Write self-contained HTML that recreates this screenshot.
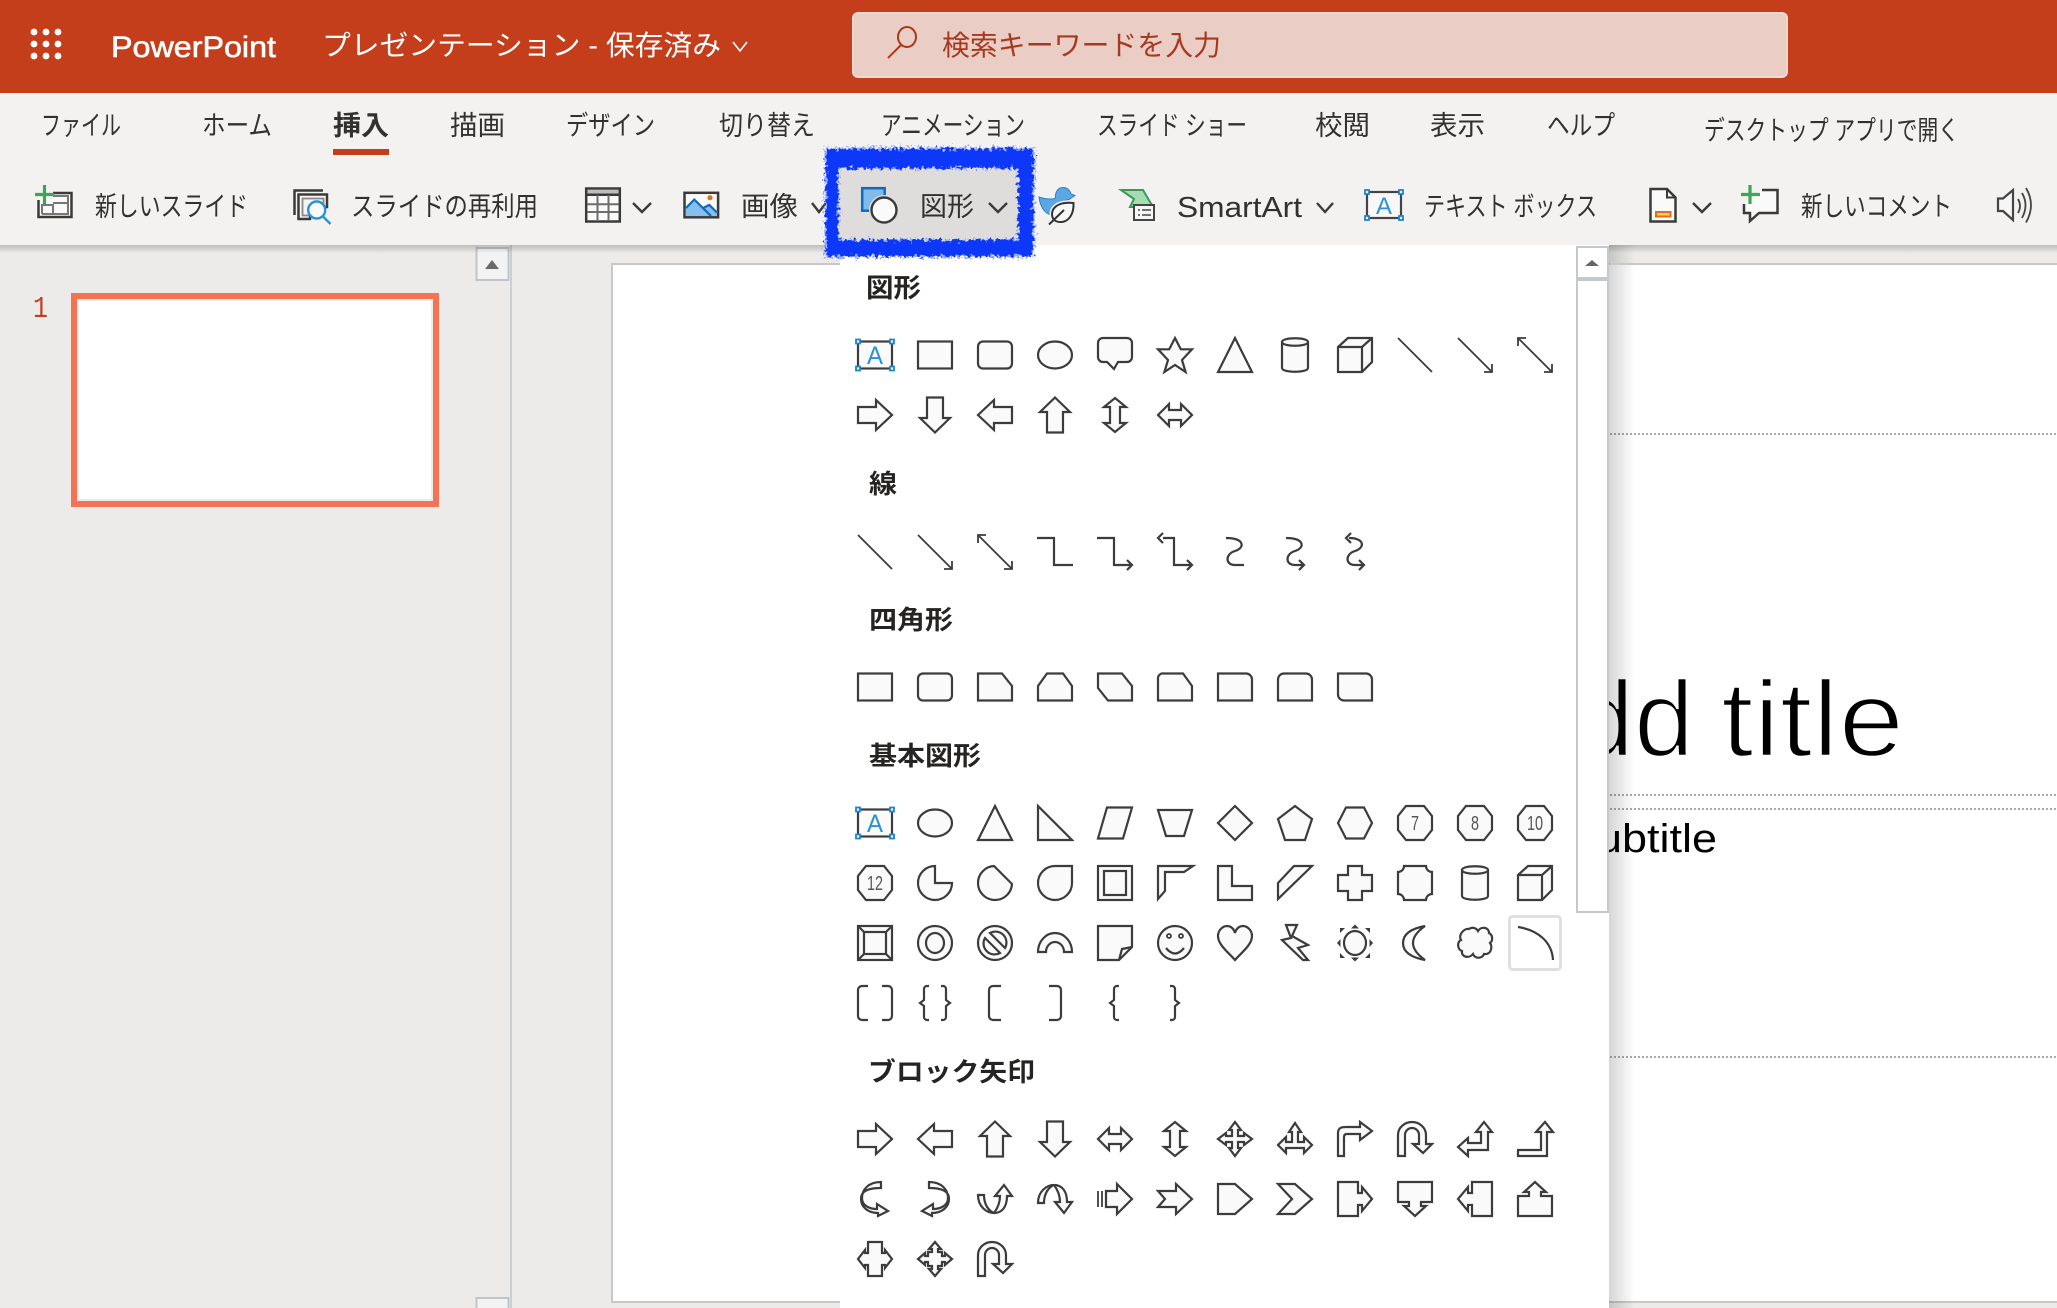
<!DOCTYPE html>
<html lang="ja"><head><meta charset="utf-8"><title>PowerPoint</title>
<style>
html,body{margin:0;padding:0;width:2057px;height:1308px;overflow:hidden;background:#ecebe9}
svg{display:block}
text{font-family:"Liberation Sans","Noto Sans CJK JP",sans-serif}
.t{font-size:27px;fill:#323130}
.h{font-size:26px;font-weight:700;fill:#252423}
.s{fill:#fafafa;stroke:#3c3c3c;stroke-width:2.2}
.n{fill:none;stroke:#3c3c3c;stroke-width:2.2}
.l{fill:none;stroke:#3c3c3c;stroke-width:1.8}
.num{font-size:20px;fill:#555;stroke:none}
.chev{fill:none;stroke:#3a3a3a;stroke-width:2.4}
.dk{stroke:#3b3a39;stroke-width:2.5}
.dot{stroke:#aaa;stroke-width:2;stroke-dasharray:2 2;fill:none}
</style></head><body>
<svg xmlns="http://www.w3.org/2000/svg" width="2057" height="1308" viewBox="0 0 2057 1308">
<defs>
<linearGradient id="sh" x1="0" x2="1" y1="0" y2="0"><stop offset="0" stop-color="#000" stop-opacity=".16"/><stop offset="1" stop-color="#000" stop-opacity="0"/></linearGradient>
<linearGradient id="shd" x1="0" x2="0" y1="0" y2="1"><stop offset="0" stop-color="#000" stop-opacity=".2"/><stop offset="1" stop-color="#000" stop-opacity="0"/></linearGradient>
<filter id="rough" x="-10%" y="-20%" width="120%" height="140%"><feTurbulence type="fractalNoise" baseFrequency="0.28" numOctaves="3" seed="7"/><feDisplacementMap in="SourceGraphic" scale="11" xChannelSelector="R" yChannelSelector="G"/></filter>
<filter id="rough2" x="-10%" y="-20%" width="120%" height="140%"><feTurbulence type="fractalNoise" baseFrequency="0.4" numOctaves="2" seed="12"/><feDisplacementMap in="SourceGraphic" scale="14" xChannelSelector="G" yChannelSelector="R"/></filter>
<g id="tb"><rect class="s" x="-17" y="-13.5" width="34" height="27"/><g fill="#fff" stroke="#1a86d0" stroke-width="1.8"><rect x="-19" y="-15.5" width="4" height="4"/><rect x="15" y="-15.5" width="4" height="4"/><rect x="-19" y="11.5" width="4" height="4"/><rect x="15" y="11.5" width="4" height="4"/></g><text x="-8" y="9" font-size="25" fill="#2a93d5" textLength="16" lengthAdjust="spacingAndGlyphs">A</text></g>
<rect id="rc" class="s" x="-17" y="-13.5" width="34" height="27"/>
<rect id="rr" class="s" x="-17" y="-13.5" width="34" height="27" rx="5"/>
<ellipse id="el" class="s" cx="0" cy="0" rx="17" ry="13.5"/>
<path id="tri" class="s" d="M0,-17L17,17H-17Z"/>
<g id="cyl"><path class="s" d="M-13,-13C-13,-18 13,-18 13,-13V13C13,18 -13,18 -13,13Z"/><path class="n" d="M-13,-13C-13,-8 13,-8 13,-13"/></g>
<g id="cube"><path class="s" d="M-17,-8L-7,-17H17V7L7,17H-17Z"/><path class="n" d="M-17,-8H7V17M7,-8L17,-17"/></g>
<path id="ln" class="l" d="M-17,-17L17,17"/>
<path id="la" class="l" d="M-17,-17L17,17M17,9V17H9"/>
<path id="ld" class="l" d="M-17,-17L17,17M17,9V17H9M-17,-9V-17H-9"/>
<path id="ar" class="s" d="M-17,-8H1V-15L17,0L1,15V8H-17Z"/>
<path id="al" class="s" d="M17,-8H-1V-15L-17,0L-1,15V8H17Z"/>
<path id="au" class="s" d="M-8,17.5V-3H-15L0,-17.5L15,-3H8V17.5Z"/>
<path id="ad" class="s" d="M-8,-17.5V3H-15L0,17.5L15,3H8V-17.5Z"/>
<path id="aud" class="s" d="M0,-17L11,-8H5V8H11L0,17L-11,8H-5V-8H-11Z"/>
<path id="alr" class="s" d="M-17,0L-6,-11V-5H6V-11L17,0L6,11V5H-6V11Z"/>
<path id="oct" class="s" d="M-9,-17H9L17,-7V7L9,17H-9L-17,7V-7Z"/>
<g id="uturn"><path class="s" d="M-17,17V-4A14,13 0 0 1 11,-4V5H17L8,14L-2,5H4V-4A7,7 0 0 0 -10,-4V17Z"/></g>
<path id="curv" class="s" d="M6,-17C-7,-17 -13,-9 -13,-1C-13,7 -5,10 2,10V5L13,12L3,17V14C-7,14 -14,8 -14,0C-14,-8 -7,-11 6,-11Z"/>
<g id="cup"><path class="s" d="M-17,-4C-17,8 -8,14 -1,14C7,14 12,8 12,-3H17L9,-14L0,-3H5C5,4 2,10 -1,14C-6,12 -11,6 -11,-4Z"/></g>
</defs>

<rect width="2057" height="1308" fill="#ecebe9"/>
<rect x="612" y="264" width="1460" height="1038" fill="#fff" stroke="#c8c8c8" stroke-width="2"/>
<path class="dot" d="M1610,434H2057M1610,795H2057M1610,809H2057M1610,1057H2057"/>
<text x="1574" y="756" font-size="108" fill="#000" stroke="#fff" stroke-width="2.5" textLength="120" lengthAdjust="spacingAndGlyphs">dd</text>
<text x="1721" y="756" font-size="108" fill="#000" stroke="#fff" stroke-width="2.5" textLength="183" lengthAdjust="spacingAndGlyphs">title</text>
<text x="1597" y="852" font-size="40" fill="#000" textLength="120" lengthAdjust="spacingAndGlyphs">ubtitle</text>

<rect x="510" y="245" width="2" height="1063" fill="#ccd0d3"/>
<rect x="476.500" y="248" width="32" height="32" fill="#f3f3f3" stroke="#c0c4c8" stroke-width="2"/>
<path d="M485,269L492,260L499,269Z" fill="#6a6a6a"/>
<rect x="476.500" y="1298" width="32" height="20" fill="#f3f3f3" stroke="#c0c4c8" stroke-width="2"/>
<text x="33" y="317" font-size="31" fill="#c43e1c" textLength="15" lengthAdjust="spacingAndGlyphs" style="font-family:'Liberation Mono',monospace">1</text>
<rect x="74" y="296" width="362" height="208" fill="#fff" stroke="#f37352" stroke-width="6"/>
<rect x="78" y="300" width="354" height="200" fill="none" stroke="#eaeaea" stroke-width="2"/>

<rect x="1609" y="245" width="26" height="1063" fill="url(#sh)"/>
<rect x="840" y="245" width="769" height="1063" fill="#fff"/>
<rect x="1577" y="247" width="31" height="31" fill="#fff" stroke="#c4c8cc" stroke-width="2"/>
<path d="M1585,266L1592,260L1599,266Z" fill="#666"/>
<rect x="1577" y="280" width="31" height="632" fill="#fff" stroke="#c4c8cc" stroke-width="2"/>

<rect width="2057" height="93" fill="#c43e1c"/>
<g fill="#fff"><circle cx="34" cy="32" r="3.400"/><circle cx="46" cy="32" r="3.400"/><circle cx="58" cy="32" r="3.400"/><circle cx="34" cy="44" r="3.400"/><circle cx="46" cy="44" r="3.400"/><circle cx="58" cy="44" r="3.400"/><circle cx="34" cy="56" r="3.400"/><circle cx="46" cy="56" r="3.400"/><circle cx="58" cy="56" r="3.400"/></g>
<text x="111" y="57" font-size="30" fill="#fff" stroke="#fff" stroke-width=".6" textLength="165" lengthAdjust="spacingAndGlyphs">PowerPoint</text>
<text x="322" y="55" font-size="28" fill="#fff" textLength="399" lengthAdjust="spacingAndGlyphs">プレゼンテーション - 保存済み</text>
<path d="M733,42L740,51L747,42" fill="none" stroke="#fff" stroke-width="1.600"/>
<rect x="853" y="13" width="934" height="64" rx="5" fill="#eacdc5" stroke="#efd9d3" stroke-width="2"/>
<ellipse cx="907" cy="37" rx="9" ry="10" fill="none" stroke="#a8391a" stroke-width="2"/><path d="M901,45L888,58" stroke="#a8391a" stroke-width="2"/>
<text x="942" y="55" font-size="28" fill="#a63a1e" textLength="279" lengthAdjust="spacingAndGlyphs">検索キーワードを入力</text>

<rect y="93" width="2057" height="152" fill="#f3f2f1"/>
<rect y="245" width="840" height="8" fill="url(#shd)"/><rect x="1609" y="245" width="448" height="8" fill="url(#shd)"/>
<rect x="1610" y="263" width="447" height="2" fill="#c8c8c8"/>
<text class="t" x="41" y="135" textLength="80" lengthAdjust="spacingAndGlyphs">ファイル</text>
<text class="t" x="202" y="135" textLength="70" lengthAdjust="spacingAndGlyphs">ホーム</text>
<text class="t" x="333" y="135" textLength="56" lengthAdjust="spacingAndGlyphs" font-weight="700">挿入</text>
<rect x="333" y="149" width="56" height="6" fill="#c43e1c"/>
<text class="t" x="450" y="135" textLength="55" lengthAdjust="spacingAndGlyphs">描画</text>
<text class="t" x="566" y="135" textLength="89" lengthAdjust="spacingAndGlyphs">デザイン</text>
<text class="t" x="719" y="135" textLength="96" lengthAdjust="spacingAndGlyphs">切り替え</text>
<text class="t" x="881" y="135" textLength="144" lengthAdjust="spacingAndGlyphs">アニメーション</text>
<text class="t" x="1097" y="135" textLength="150" lengthAdjust="spacingAndGlyphs">スライド ショー</text>
<text class="t" x="1315" y="135" textLength="55" lengthAdjust="spacingAndGlyphs">校閲</text>
<text class="t" x="1430" y="135" textLength="55" lengthAdjust="spacingAndGlyphs">表示</text>
<text class="t" x="1547" y="135" textLength="68" lengthAdjust="spacingAndGlyphs">ヘルプ</text>
<text class="t" x="1704" y="140" textLength="255" lengthAdjust="spacingAndGlyphs">デスクトップ アプリで開く</text>

<!-- new slide -->
<path d="M38.500,200V217H71.500V193H53" fill="#f9f9f9" class="dk"/>
<path d="M42,214V205H53V214M53,203H68M53,196H68V214H42" fill="none" stroke="#777" stroke-width="2"/>
<path d="M44.500,185V204M35,194.500H54" stroke="#3aa757" stroke-width="3.200"/>
<text class="t" x="95" y="216" textLength="153" lengthAdjust="spacingAndGlyphs">新しいスライド</text>

<!-- reuse -->
<path d="M294.500,215V190.500H323" fill="none" class="dk"/>
<path d="M298.500,219V194.500H327V207H310V219Z" fill="#f9f9f9" class="dk"/>
<rect x="302.500" y="198.500" width="21" height="17" fill="#f5f5f5" stroke="#888" stroke-width="1.800"/>
<circle cx="316.700" cy="210" r="8.500" fill="#fafafa" stroke="#2a93d5" stroke-width="2.400"/><path d="M322.500,216L330.500,224" stroke="#2a93d5" stroke-width="2.400"/>
<text class="t" x="351" y="216" textLength="187" lengthAdjust="spacingAndGlyphs">スライドの再利用</text>

<!-- table -->
<rect x="586.200" y="188.500" width="33.600" height="33" fill="#fafafa" class="dk"/>
<rect x="587.500" y="190" width="31" height="4" fill="#bdbdbc"/><path d="M586,194.800H620" class="dk"/>
<path d="M597.500,195V221M608.500,195V221M587,204.300H619M587,212H619" stroke="#6d6d6d" stroke-width="2"/>
<path class="chev" d="M633,203L642,212L651,203"/>

<!-- picture -->
<rect x="684.500" y="192.800" width="33.600" height="24.500" fill="#fafafa" class="dk"/>
<path d="M686,208L694.300,199.500L703,208.500L709.300,205L717,212.500V216H686Z" fill="#85bfee"/>
<path d="M686,208L694.300,199.500L711,216M703,208L709.300,205L717,212.500" fill="none" stroke="#1269b5" stroke-width="2.200"/>
<circle cx="710" cy="197.700" r="2.600" fill="#e07010"/>
<text class="t" x="741" y="216" textLength="57" lengthAdjust="spacingAndGlyphs">画像</text>
<path class="chev" d="M812,203L819,212L826,203"/>

<!-- bird -->
<path d="M1039,197C1046,199.500 1053,199.500 1055.500,198C1055,192 1058,187.500 1063,187.500C1068,187.500 1070,191 1071,194L1075,195.500L1069,199.500C1060,201 1053,207 1051,215C1044,213 1040,206 1039,197Z" fill="#5aa7e3" stroke="#2a7fc8" stroke-width="1"/>
<path d="M1073.500,203C1062,202 1052.500,205 1052,214C1052,219 1055,222.500 1062,222C1069,221 1074,214 1073.500,203Z" fill="#f7f7f6" stroke="#f3f2f1" stroke-width="5"/>
<path d="M1073.500,203C1062,202 1052.500,205 1052,214C1052,219 1055,222.500 1062,222C1069,221 1074,214 1073.500,203Z" fill="#f7f7f6" stroke="#333" stroke-width="2"/>
<path d="M1049,224.500L1064,210" stroke="#333" stroke-width="2"/>

<!-- smartart -->
<path d="M1121,190H1143L1153,207H1130L1134,199Z" fill="#a6dcb2" stroke="#3a9a5b" stroke-width="2"/>
<rect x="1134" y="205" width="20" height="15" fill="#f6f6f6" stroke="#444" stroke-width="2"/><path d="M1138,210H1140M1142,210H1151M1138,215H1140M1142,215H1151" stroke="#444" stroke-width="1.500"/>
<text x="1177" y="217" font-size="29" fill="#323130" textLength="125" lengthAdjust="spacingAndGlyphs">SmartArt</text>
<path class="chev" d="M1317,203L1325,212L1333,203"/>

<!-- textbox -->
<rect x="1367" y="192" width="34" height="26" fill="#f8f8f8" stroke="#444" stroke-width="2.200"/><g fill="#fff" stroke="#1a86d0" stroke-width="1.800"><rect x="1365" y="190" width="4" height="4"/><rect x="1399" y="190" width="4" height="4"/><rect x="1365" y="216" width="4" height="4"/><rect x="1399" y="216" width="4" height="4"/></g>
<text x="1376" y="214" font-size="24" fill="#2a93d5" textLength="16" lengthAdjust="spacingAndGlyphs">A</text>
<text class="t" x="1424" y="216" textLength="173" lengthAdjust="spacingAndGlyphs">テキスト ボックス</text>

<!-- doc -->
<path d="M1650.500,189H1667L1675.500,197.500V221.500H1650.500Z" fill="#fafafa" class="dk"/><path d="M1667,189V197.500H1675.500" fill="none" stroke="#3b3a39" stroke-width="2"/>
<rect x="1656" y="212" width="14.500" height="4.500" fill="#f4c97a" stroke="#e07010" stroke-width="2"/>
<path class="chev" d="M1693,203L1702,212L1711,203"/>

<!-- comment -->
<path d="M1762,190H1777.500V213H1759L1750,221V213H1744V204" fill="#fafafa" class="dk"/>
<path d="M1750,185V204M1741,194.500H1760" stroke="#3aa757" stroke-width="3.200"/>
<text class="t" x="1801" y="216" textLength="151" lengthAdjust="spacingAndGlyphs">新しいコメント</text>

<!-- speaker -->
<path d="M1998,198.500H2003L2013,190V220L2003,211H1998Z" fill="#f6f6f6" stroke="#444" stroke-width="2.200"/><path d="M2018,199Q2022,206 2018,213M2022,193Q2029,205 2022,218M2026,188Q2036,205 2026,222.500" fill="none" stroke="#444" stroke-width="1.800"/>

<!-- highlighted shapes button -->
<rect x="835" y="165" width="187" height="78" fill="#dedddc"/>
<path d="M825,148H1034V257H825ZM838,168V240H1019V168Z" fill="#8ea8ff" fill-rule="evenodd" filter="url(#rough2)"/>
<path d="M826,149H1033V256H826ZM838,168V240H1018V168Z" fill="#0a38fa" fill-rule="evenodd" filter="url(#rough)"/>
<rect x="862.200" y="188.200" width="22.500" height="22.500" fill="#7fbcec" stroke="#0f6cbd" stroke-width="2.500"/>
<circle cx="884" cy="210" r="15" fill="#dedddc"/>
<circle cx="884" cy="210" r="12.500" fill="#fafafa" stroke="#3a3a3a" stroke-width="2.400"/>
<text class="t" x="920" y="216" textLength="54" lengthAdjust="spacingAndGlyphs">図形</text>
<path class="chev" d="M989,203L998,212L1007,203"/>

<text class="h" x="866" y="297" textLength="55" lengthAdjust="spacingAndGlyphs">図形</text>
<text class="h" x="869" y="493" textLength="28" lengthAdjust="spacingAndGlyphs">線</text>
<text class="h" x="869" y="629" textLength="84" lengthAdjust="spacingAndGlyphs">四角形</text>
<text class="h" x="869" y="765" textLength="112" lengthAdjust="spacingAndGlyphs">基本図形</text>
<text class="h" x="868" y="1081" textLength="167" lengthAdjust="spacingAndGlyphs">ブロック矢印</text>

<use href="#tb" x="875" y="355"/><use href="#rc" x="935" y="355"/><use href="#rr" x="995" y="355"/><use href="#el" x="1055" y="355"/>
<path class="s" transform="translate(1115,355)" d="M-12,-17H12a5,5 0 0 1 5,5V2a5,5 0 0 1 -5,5H3L-1,14L-8,7H-12a5,5 0 0 1 -5,-5V-12a5,5 0 0 1 5,-5Z"/>
<path class="s" transform="translate(1175,355)" d="M0,-17L5.800,-5.700H17L7,5L10.600,17L0,10L-10.600,17L-7,5L-17,-5.700H-5.800Z"/>
<use href="#tri" x="1235" y="355"/><use href="#cyl" x="1295" y="355"/><use href="#cube" x="1355" y="355"/><use href="#ln" x="1415" y="355"/><use href="#la" x="1475" y="355"/><use href="#ld" x="1535" y="355"/>
<use href="#ar" x="875" y="415"/><use href="#ad" x="935" y="415"/><use href="#al" x="995" y="415"/><use href="#au" x="1055" y="415"/><use href="#aud" x="1115" y="415"/><use href="#alr" x="1175" y="415"/>

<use href="#ln" x="875" y="552"/><use href="#la" x="935" y="552"/><use href="#ld" x="995" y="552"/>
<path class="n" transform="translate(1055,552)" d="M-18,-14H-1V13H18"/>
<path class="n" transform="translate(1115,552)" d="M-18,-14H-1V13H17M12,8L17,13L12,18"/>
<path class="n" transform="translate(1175,552)" d="M-12,-14H-1V13H17M12,8L17,13L12,18M-12,-19L-17,-14L-12,-9"/>
<path class="n" transform="translate(1235,552)" d="M-9,-14C10,-14 10,-4 0,-1C-10,2 -10,13 0,13H9"/>
<path class="n" transform="translate(1295,552)" d="M-9,-14C10,-14 10,-4 0,-1C-10,2 -10,13 0,13H8M4,8L9,13L4,18"/>
<path class="n" transform="translate(1355,552)" d="M-6,-14C10,-14 10,-4 0,-1C-10,2 -10,13 0,13H8M4,8L9,13L4,18M-4,-19L-9,-14L-4,-9"/>

<g transform="translate(0,687)">
<use href="#rc" x="875"/><use href="#rr" x="935"/>
<path class="s" transform="translate(995,0)" d="M-17,-13.500H7L17,-1V13.500H-17Z"/>
<path class="s" transform="translate(1055,0)" d="M-8,-13.500H8L17,-1V13.500H-17V-1Z"/>
<path class="s" transform="translate(1115,0)" d="M-17,-13.500H7L17,-1V13.500H-7L-17,1Z"/>
<path class="s" transform="translate(1175,0)" d="M-11,-13.500H8L17,-1V13.500H-17V-8A5,5 0 0 1 -11,-13.500Z"/>
<path class="s" transform="translate(1235,0)" d="M-17,-13.500H11A6,6 0 0 1 17,-7.500V13.500H-17Z"/>
<path class="s" transform="translate(1295,0)" d="M-11,-13.500H11A6,6 0 0 1 17,-7.500V13.500H-17V-7.500A6,6 0 0 1 -11,-13.500Z"/>
<path class="s" transform="translate(1355,0)" d="M-17,-13.500H11A6,6 0 0 1 17,-7.500V13.500H-11A6,6 0 0 1 -17,7.500Z"/>
</g>

<g transform="translate(0,823)">
<use href="#tb" x="875"/><use href="#el" x="935"/><use href="#tri" x="995"/>
<path class="s" transform="translate(1055,0)" d="M-17,-17L17,17H-17Z"/>
<path class="s" transform="translate(1115,0)" d="M-8,-15.500H17L8,15.500H-17Z"/>
<path class="s" transform="translate(1175,0)" d="M-17,-13H17L9,13H-9Z"/>
<path class="s" transform="translate(1235,0)" d="M0,-17L17,0L0,17L-17,0Z"/>
<path class="s" transform="translate(1295,0)" d="M0,-17L17,-4L10,17H-10L-17,-4Z"/>
<path class="s" transform="translate(1355,0)" d="M-17,0L-9,-15.500H9L17,0L9,15.500H-9Z"/>
<use href="#oct" x="1415"/><text class="num" x="1411" y="7" textLength="8" lengthAdjust="spacingAndGlyphs">7</text>
<use href="#oct" x="1475"/><text class="num" x="1471" y="7" textLength="8" lengthAdjust="spacingAndGlyphs">8</text>
<use href="#oct" x="1535"/><text class="num" x="1527" y="7" textLength="16" lengthAdjust="spacingAndGlyphs">10</text>
</g>
<g transform="translate(0,883)">
<use href="#oct" x="875"/><text class="num" x="867" y="7" textLength="16" lengthAdjust="spacingAndGlyphs">12</text>
<path class="s" transform="translate(935,0)" d="M0,-17V0H17A17,17 0 1 1 0,-17Z"/>
<path class="s" transform="translate(995,0)" d="M-1,-17L17,1A17,17 0 0 1 0,17A17,17 0 0 1 -17,0A17,17 0 0 1 -1,-17Z"/>
<path class="s" transform="translate(1055,0)" d="M17,-17V0A17,17 0 1 1 0,-17Z"/>
<g transform="translate(1115,0)"><rect class="s" x="-17" y="-17" width="34" height="34"/><rect class="n" x="-11" y="-12" width="22" height="24"/></g>
<path class="s" transform="translate(1175,0)" d="M-17,-17H18L9,-11H-10V8L-17,16Z"/>
<path class="s" transform="translate(1235,0)" d="M-17,-17H-3V3H17V17H-17Z"/>
<path class="s" transform="translate(1295,0)" d="M-17,0L-1,-17H17L-17,16Z"/>
<path class="s" transform="translate(1355,0)" d="M-7,-17H7V-8H17V8H7V17H-7V8H-17V-8H-7Z"/>
<path class="s" transform="translate(1415,0)" d="M-11,-17H11A6,6 0 0 0 17,-11V11A6,6 0 0 0 11,17H-11A6,6 0 0 0 -17,11V-11A6,6 0 0 0 -11,-17Z"/>
<use href="#cyl" x="1475"/><use href="#cube" x="1535"/>
</g>
<g transform="translate(0,943)">
<g transform="translate(875,0)"><rect class="s" x="-17" y="-17" width="34" height="34"/><rect class="n" x="-11" y="-11" width="22" height="22"/><path class="n" d="M-17,-17L-11,-11M17,-17L11,-11M-17,17L-11,11M17,17L11,11"/></g>
<g transform="translate(935,0)"><ellipse class="s" rx="17" ry="17"/><ellipse class="n" rx="9" ry="10"/></g>
<g transform="translate(995,0)"><ellipse class="s" rx="17" ry="17"/><path class="n" d="M-5,-10L10,5A11,11 0 0 0 -5,-10ZM5,10L-10,-5A11,11 0 0 0 5,10Z"/></g>
<path class="s" transform="translate(1055,0)" d="M-17,9A17,19 0 0 1 17,9H9A9,10 0 0 0 -9,9Z"/>
<g transform="translate(1115,0)"><path class="s" d="M-17,-17H17V4L4,17H-17Z"/><path class="n" d="M4,17L7,6L17,4"/></g>
<g transform="translate(1175,0)"><ellipse class="s" rx="17" ry="17"/><circle class="l" cx="-6" cy="-7" r="2"/><circle class="l" cx="6" cy="-7" r="2"/><path class="n" d="M-9,5Q0,16 9,5"/></g>
<path class="s" transform="translate(1235,0)" d="M0,17C-6,10 -17,2 -17,-7C-17,-13 -12,-17 -8,-17C-4,-17 -1,-14 0,-10C1,-14 4,-17 8,-17C12,-17 17,-13 17,-7C17,2 6,10 0,17Z"/>
<path class="s" transform="translate(1295,0)" d="M-9,-18L2,-18L-3,-7L13,2L3,5L13,17L8,17L-13,-3L-4,-5Z"/>
<g transform="translate(1355,0)"><ellipse class="s" rx="11" ry="12"/><path fill="#3c3c3c" d="M0,-18.500L4,-14.500H-4ZM0,18.500L4,14.500H-4ZM-18,0L-14.500,-4V4ZM18,0L14.500,-4V4ZM-15,-15H-10L-15,-10ZM15,-15H10L15,-10ZM-15,15H-10L-15,10ZM15,15H10L15,10Z"/></g>
<path class="s" transform="translate(1415,0)" d="M10,-17C-6,-14 -12,-8 -12,0C-12,8 -6,14 10,17C3,12 -2,6 -2,0C-2,-6 3,-12 10,-17Z"/>
<path class="s" transform="translate(1475,0)" d="M-6,-14C-2,-17 2,-14 3,-12C6,-17 14,-16 14,-10C18,-8 18,-2 15,0C18,4 16,12 9,11C7,16 0,16 -2,11C-6,16 -14,14 -13,8C-18,6 -18,-1 -14,-3C-17,-8 -11,-15 -6,-14Z"/>
</g>
<rect x="1509.500" y="916.500" width="51" height="53" rx="3" fill="#fff" stroke="#e0e0e0" stroke-width="3"/>
<path class="n" d="M1518,927C1538,930 1552,942 1553,960"/>
<g transform="translate(0,1003)">
<path class="n" transform="translate(875,0)" d="M-7,-17H-13a4,4 0 0 0 -4,4V13a4,4 0 0 0 4,4H-7M7,-17H13a4,4 0 0 1 4,4V13a4,4 0 0 1 -4,4H7"/>
<path class="n" transform="translate(935,0)" d="M-6,-17H-8a3,3 0 0 0 -3,3V-3L-15,0L-11,3V14a3,3 0 0 0 3,3H-6M6,-17H8a3,3 0 0 1 3,3V-3L15,0L11,3V14a3,3 0 0 1 -3,3H6"/>
<path class="n" transform="translate(995,0)" d="M6,-17H-2a4,4 0 0 0 -4,4V13a4,4 0 0 0 4,4H6"/>
<path class="n" transform="translate(1055,0)" d="M-6,-17H2a4,4 0 0 1 4,4V13a4,4 0 0 1 -4,4H-6"/>
<path class="n" transform="translate(1115,0)" d="M4,-17H2a3,3 0 0 0 -3,3V-3L-5,0L-1,3V14a3,3 0 0 0 3,3H4"/>
<path class="n" transform="translate(1175,0)" d="M-5,-17H-3a3,3 0 0 1 3,3V-3L4,0L0,3V14a3,3 0 0 1 -3,3H-5"/>
</g>

<g transform="translate(0,1139)">
<use href="#ar" x="875"/><use href="#al" x="935"/><use href="#au" x="995"/><use href="#ad" x="1055"/><use href="#alr" x="1115"/><use href="#aud" x="1175"/>
<path class="s" transform="translate(1235,0)" d="M0,-17L6,-9H3V-3H9V-6L17,0L9,6V3H3V9H6L0,17L-6,9H-3V3H-9V6L-17,0L-9,-6V-3H-3V-9H-6Z"/>
<path class="s" transform="translate(1295,0)" d="M0,-16L6,-7H3V3H9V-2L17,6L9,14V9H-9V14L-17,6L-9,-2V3H-3V-7H-6Z"/>
<path class="s" transform="translate(1355,0)" d="M-17,17V-6C-17,-12 -12,-12 -9,-12H5V-17L17,-8L5,1V-5H-8C-10,-5 -11,-4 -11,-2V17Z"/>
<use href="#uturn" x="1415"/>
<path class="s" transform="translate(1475,0)" d="M9,-17L17,-7H13V11H-7V17L-17,8L-7,-1V4H6V-7H1Z"/>
<path class="s" transform="translate(1535,0)" d="M-17,11H6V-7H1L10,-17L18,-7H12V17H-17Z"/>
</g>
<g transform="translate(0,1199)">
<use href="#curv" x="875"/>
<use href="#curv" transform="translate(935,0) scale(-1,1)"/>
<use href="#cup" x="995"/>
<use href="#cup" transform="translate(1055,0) scale(1,-1)"/>
<g transform="translate(1115,0)"><path class="s" d="M-9,-8H2V-15L17,0L2,15V8H-9Z"/><path class="l" d="M-17,-8V8M-13,-8V8"/></g>
<path class="s" transform="translate(1175,0)" d="M-17,-8H1V-15L17,0L1,15V8H-17L-10,0Z"/>
<path class="s" transform="translate(1235,0)" d="M-17,-15H0L17,0L0,15H-17Z"/>
<path class="s" transform="translate(1295,0)" d="M-17,-15H0L17,0L0,15H-17L-3,0Z"/>
<path class="s" transform="translate(1355,0)" d="M-17,-17H3V-6H7V-12L17,0L7,12V6H3V17H-17Z"/>
<path class="s" transform="translate(1415,0)" d="M-17,-17H17V3H6V7H11L0,17L-11,7H-6V3H-17Z"/>
<path class="s" transform="translate(1475,0)" d="M17,-17H-3V-6H-7V-12L-17,0L-7,12V6H-3V17H17Z"/>
<path class="s" transform="translate(1535,0)" d="M-17,17H17V-3H6V-7H11L0,-17L-11,-7H-6V-3H-17Z"/>
</g>
<g transform="translate(0,1259)">
<path class="s" transform="translate(875,0)" d="M-7,-17H7V-6H10V-9L17,0L10,9V6H7V17H-7V6H-10V9L-17,0L-10,-9V-6H-7Z"/>
<path class="s" transform="translate(935,0)" d="M0,-17L6,-10H3V-7H7V-3H10V-6L17,0L10,6V3H7V7H3V10H6L0,17L-6,10H-3V7H-7V3H-10V6L-17,0L-10,-6V-3H-7V-7H-3V-10H-6Z"/>
<use href="#uturn" x="995"/>
</g>
</svg>
</body></html>
